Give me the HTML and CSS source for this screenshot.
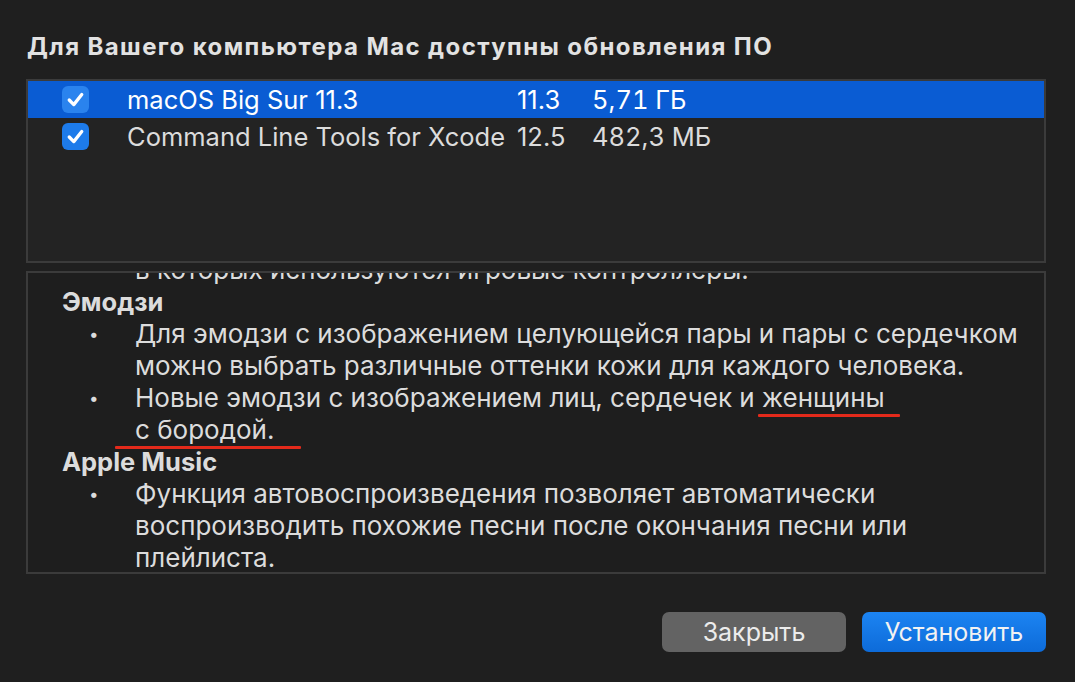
FILE: index.html
```html
<!DOCTYPE html>
<html lang="ru">
<head>
<meta charset="utf-8">
<link rel="stylesheet" href="styles.css">
</head>
<body>
<div class="dialog">
  <h1 class="title">Для Вашего компьютера Mac доступны обновления ПО</h1>
  <div class="table">
    <div class="row selected">
      <span class="check"><svg viewBox="0 0 28 28" width="27" height="27"><path d="M7.5 14.5 L12.2 19.3 L20.5 8.8" fill="none" stroke="#fff" stroke-width="3.4" stroke-linecap="round" stroke-linejoin="round"/></svg></span>
      <span class="name">macOS Big Sur 11.3</span>
      <span class="ver">11.3</span>
      <span class="size">5,71 ГБ</span>
    </div>
    <div class="row">
      <span class="check"><svg viewBox="0 0 28 28" width="27" height="27"><path d="M7.5 14.5 L12.2 19.3 L20.5 8.8" fill="none" stroke="#fff" stroke-width="3.4" stroke-linecap="round" stroke-linejoin="round"/></svg></span>
      <span class="name">Command Line Tools for Xcode</span>
      <span class="ver">12.5</span>
      <span class="size">482,3 МБ</span>
    </div>
  </div>
  <div class="notes">
    <div class="notes-inner">
      <div class="para">в которых используются игровые контроллеры.</div>
      <div class="head">Эмодзи</div>
      <ul class="list">
        <li>Для эмодзи с изображением целующейся пары и пары с сердечком<br>можно выбрать различные оттенки кожи для каждого человека.</li>
        <li>Новые эмодзи с изображением лиц, сердечек и <span class="mark mark-a">женщины</span><br><span class="mark mark-b">с бородой.</span></li>
      </ul>
      <div class="head">Apple Music</div>
      <ul class="list">
        <li>Функция автовоспроизведения позволяет автоматически<br>воспроизводить похожие песни после окончания песни или<br>плейлиста.</li>
      </ul>
    </div>
  </div>
  <div class="buttons">
    <button class="btn btn-gray">Закрыть</button>
    <button class="btn btn-blue">Установить</button>
  </div>
</div>
</body>
</html>
```

FILE: styles.css
```css
html, body {
  margin: 0;
  padding: 0;
  background: #1f1f1f;
}
body {
  width: 1075px;
  height: 682px;
  overflow: hidden;
  font-family: Inter, "Liberation Sans", sans-serif;
  color: #dedede;
}
.dialog {
  padding: 0 29px 0 26px;
  display: flex;
  flex-direction: column;
}
.title {
  margin: 32px 0 0 1px;
  font-size: 24px;
  font-weight: 700;
  line-height: 30px;
  color: #e2e2e2;
  letter-spacing: 1.4px;
  white-space: nowrap;
}
.table {
  margin-top: 17px;
  height: 180px;
  border: 2px solid #3b3b3b;
  background: #232323;
}
.row {
  display: grid;
  grid-template-columns: 27px 428px 75px auto;
  align-items: center;
  height: 37px;
  padding-left: 34px;
  font-size: 25.5px;
  color: #dcdcdc;
}
.row .name { padding-left: 38px; white-space: nowrap; }
.row .ver, .row .size { white-space: nowrap; }
.row .size { font-variant-numeric: tabular-nums; }
.row.selected {
  background: #0a5cd3;
  color: #ffffff;
}
.check {
  width: 27px;
  height: 27px;
  border-radius: 6px;
  background: #1d7bea;
  display: block;
}
.selected .check {
  background: #2a83ee;
}
.check svg { display: block; }
.notes {
  margin-top: 8px;
  height: 299px;
  border: 2px solid #3b3b3b;
  background: #1e1e1e;
  overflow: hidden;
}
.notes-inner {
  margin-top: -19px;
  padding-left: 34px;
  font-size: 26px;
  line-height: 32px;
  color: #dcdcdc;
  white-space: nowrap;
}
.para {
  padding-left: 73px;
}
.head {
  font-weight: 700;
  font-size: 25.5px;
}
.list {
  list-style: none;
  margin: 0;
  padding: 0 0 0 73px;
}
.list li {
  position: relative;
}
.list li::before {
  content: "•";
  position: absolute;
  left: -46px;
  font-size: 17px;
}
.mark {
  position: relative;
}
.mark::after {
  content: "";
  position: absolute;
  height: 3px;
  background: #e42a1b;
  bottom: -4px;
  border-radius: 1px;
}
.mark-a::after { left: -4px; right: -15px; }
.mark-b::after { left: -20px; right: -27px; }
.buttons {
  display: flex;
  justify-content: flex-end;
  gap: 16px;
  margin-top: 38px;
}
.btn {
  width: 184px;
  height: 40px;
  border: none;
  border-radius: 7px;
  font-family: Inter, "Liberation Sans", sans-serif;
  font-size: 25px;
  color: #ececec;
  padding: 0;
}
.btn-gray {
  background: #636363;
}
.btn-blue {
  background: linear-gradient(#1c84f2, #0d6bd9);
  color: #f2f2f2;
}
```
